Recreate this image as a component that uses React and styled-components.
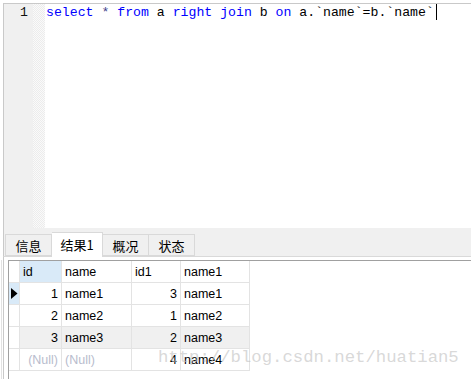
import React from "react";
import styled, { createGlobalStyle } from "styled-components";

const Global = createGlobalStyle`
  html, body { margin: 0; padding: 0; background: #fff; overflow: hidden; }
  #root { width: 471px; height: 379px; }
`;

const Frame = styled.div`
  width: 471px;
  height: 379px;
  box-sizing: border-box;
  padding-left: 3px;
  display: flex;
  flex-direction: column;
  position: relative;
  font-family: "Liberation Sans", "Noto Sans CJK SC", sans-serif;
`;

const Editor = styled.div`
  margin-top: 3px;
  height: 225px;
  border-top: 1px solid #c9c9c9;
  border-left: 1px solid #c9c9c9;
  display: flex;
  box-sizing: border-box;
`;

const Gutter = styled.div`
  width: 29px;
  background: #f0f0f0;
  box-sizing: border-box;
  padding-right: 5px;
  text-align: right;
  font-family: "Liberation Mono", monospace;
  font-size: 13.2px;
  line-height: 17px;
  color: #101010;
`;

const FoldStrip = styled.div`
  width: 12px;
  background-color: #fff;
  background-image: repeating-conic-gradient(#ececec 0 25%, #fafafa 0 50%);
  background-size: 2px 2px;
`;

const Code = styled.div`
  flex: 1;
  padding-left: 1px;
  font-family: "Liberation Mono", monospace;
  font-size: 13.2px;
  line-height: 17px;
  color: #000;
  white-space: pre;
  display: flex;
  align-items: flex-start;
`;

const Kw = styled.span`
  color: #0000ff;
`;

const Op = styled.span`
  color: #40408a;
`;

const Caret = styled.span`
  display: inline-block;
  width: 1px;
  height: 16px;
  background: #000;
  margin-left: 2px;
`;

const TabBar = styled.div`
  height: 28px;
  background: #f0f0f0;
  border-bottom: 1px solid #d9d9d9;
  border-left: 1px solid #c9c9c9;
  display: flex;
  align-items: flex-end;
  padding-left: 1px;
`;

const Tab = styled.div`
  width: ${(p) => p.$w}px;
  height: ${(p) => (p.$active ? 25 : 22)}px;
  margin-bottom: ${(p) => (p.$active ? -1 : 0)}px;
  box-sizing: border-box;
  border: 1px solid #d9d9d9;
  border-bottom: ${(p) => (p.$active ? "none" : "1px solid #d9d9d9")};
  border-left: ${(p) => (p.$first ? "1px solid #d9d9d9" : "none")};
  background: ${(p) => (p.$active ? "#fff" : "#f0f0f0")};
  display: flex;
  align-items: center;
  justify-content: center;
  padding-bottom: ${(p) => (p.$active ? 2 : 0)}px;
  font-size: 13px;
  color: #000;
  font-family: "Noto Sans CJK SC", "Liberation Sans", sans-serif;
`;

const Gap = styled.div`
  height: 3px;
  border-left: 1px solid #c9c9c9;
`;

const ResultArea = styled.div`
  flex: 1;
  border-left: 1px solid #c9c9c9;
  position: relative;
  &::before {
    content: "";
    position: absolute;
    left: -3px;
    top: 0;
    bottom: 0;
    width: 1px;
    background: #e2e2e2;
  }
`;

const GridBox = styled.div`
  height: 100%;
  margin-left: 4px;
  border-top: 1px solid #a0a0a0;
  border-left: 1px solid #a0a0a0;
  box-sizing: border-box;
`;

const Row = styled.div`
  display: grid;
  grid-template-columns: 11px 42px 70px 49px 69px;
  height: 22px;
`;

const Cell = styled.div`
  box-sizing: border-box;
  border-right: 1px solid #e3e3e3;
  border-bottom: 1px solid #e3e3e3;
  background: ${(p) => p.$bg || "#fff"};
  display: flex;
  align-items: center;
  justify-content: ${(p) => (p.$right ? "flex-end" : "flex-start")};
  padding: ${(p) => (p.$right ? "0 3px 0 0" : "0 0 0 3px")};
  font-size: 12.5px;
  color: ${(p) => (p.$null ? "#b8bccd" : "#000")};
  white-space: nowrap;
  overflow: hidden;
`;

const Indicator = styled(Cell)`
  padding: 0 0 0 2px;
`;

const Watermark = styled.div`
  position: absolute;
  left: 158px;
  top: 346px;
  font-family: "Liberation Mono", monospace;
  font-size: 17.3px;
  line-height: 24px;
  color: rgba(195, 195, 195, 0.65);
  white-space: nowrap;
  pointer-events: none;
`;

const rows = [
  { id: "1", name: "name1", id1: "3", name1: "name1", current: true },
  { id: "2", name: "name2", id1: "1", name1: "name2" },
  { id: "3", name: "name3", id1: "2", name1: "name3", shade: true },
  { id: "(Null)", name: "(Null)", id1: "4", name1: "name4", nulls: true },
];

const SELECT_BG = "#d9eaf8";

export default function App() {
  return (
    <>
      <Global />
      <Frame>
        <Editor>
          <Gutter>1</Gutter>
          <FoldStrip />
          <Code>
            <span>
              <Kw>select</Kw> <Op>*</Op> <Kw>from</Kw> a <Kw>right</Kw>{" "}
              <Kw>join</Kw> b <Kw>on</Kw> a.`name`=b.`name`
            </span>
            <Caret />
          </Code>
        </Editor>
        <TabBar>
          <Tab $w={47} $first>信息</Tab>
          <Tab $w={51} $active>结果1</Tab>
          <Tab $w={46}>概况</Tab>
          <Tab $w={46}>状态</Tab>
        </TabBar>
        <Gap />
        <ResultArea>
          <GridBox>
            <Row>
              <Indicator />
              <Cell $bg={SELECT_BG}>id</Cell>
              <Cell>name</Cell>
              <Cell>id1</Cell>
              <Cell>name1</Cell>
            </Row>
            {rows.map((r, i) => {
              const bg = r.shade ? "#f0f0f0" : undefined;
              return (
                <Row key={i}>
                  <Indicator $bg={r.current ? SELECT_BG : undefined}>
                    {r.current && (
                      <svg width="7" height="11" viewBox="0 0 7 11">
                        <path d="M0 0 L6.5 5.5 L0 11 Z" fill="#000" />
                      </svg>
                    )}
                  </Indicator>
                  <Cell $right $bg={bg} $null={r.nulls}>{r.id}</Cell>
                  <Cell $bg={bg} $null={r.nulls}>{r.name}</Cell>
                  <Cell $right $bg={bg}>{r.id1}</Cell>
                  <Cell $bg={bg}>{r.name1}</Cell>
                </Row>
              );
            })}
          </GridBox>
        </ResultArea>
        <Watermark>http://blog.csdn.net/huatian5</Watermark>
      </Frame>
    </>
  );
}
